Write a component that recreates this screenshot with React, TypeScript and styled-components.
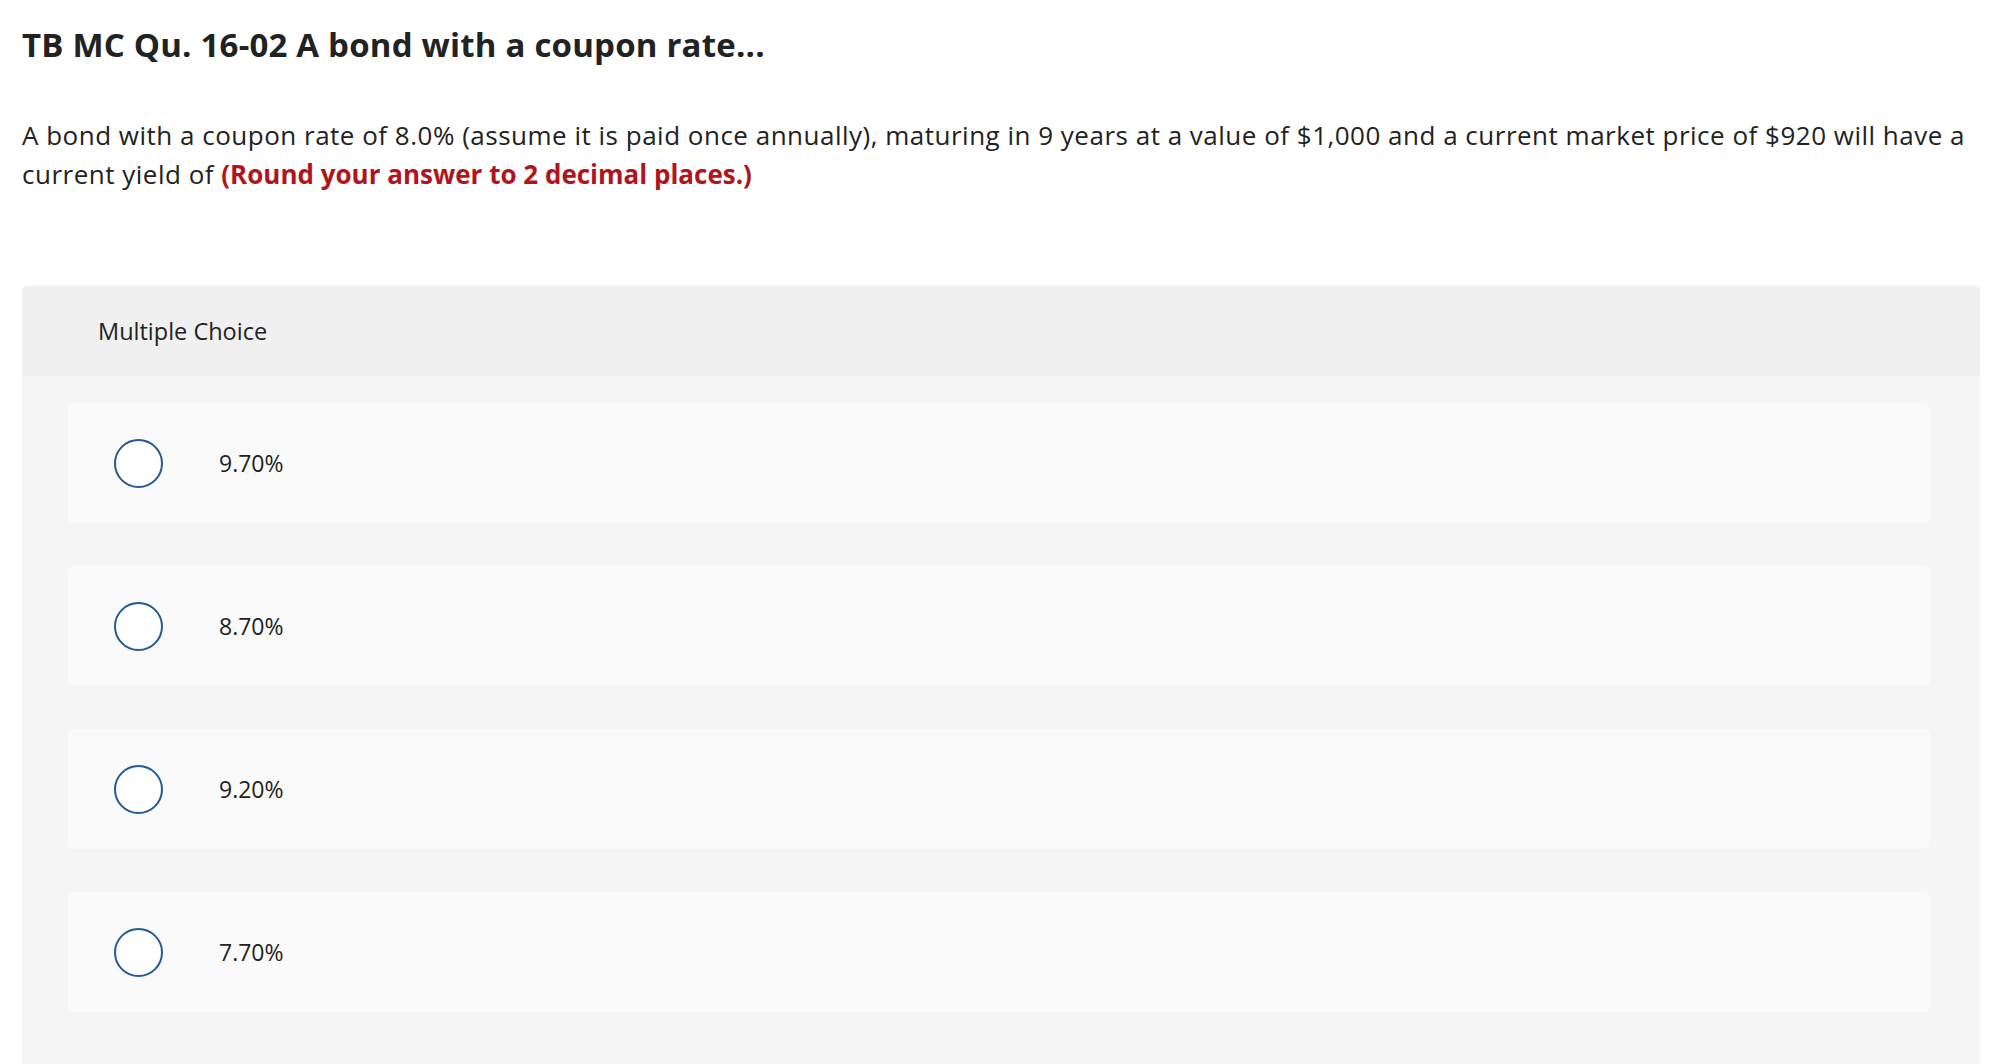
import styled, {createGlobalStyle} from "styled-components";

const GlobalStyle = createGlobalStyle`
  html, body {
    margin: 0;
    padding: 0;
    background: #fff;
    overflow: hidden;
  }
  body {
    font-family: "Open Sans", Lato, Arial, sans-serif;
    color: #222;
  }
`

const choices = ['9.70%', '8.70%', '9.20%', '7.70%']

const App = () => {
    return (
        <Page>
            <GlobalStyle/>
            <Title>TB MC Qu. 16-02 A bond with a coupon rate...</Title>
            <Prompt>
                <span>
                    A bond with a coupon rate of 8.0% (assume it is paid once annually), maturing in 9 years at a
                    value of $1,000 and a current market price of $920 will have a
                </span>
                <br/>
                <span>current yield of </span>
                <Hint>(Round your answer to 2 decimal places.)</Hint>
            </Prompt>
            <Panel>
                <PanelHeader>Multiple Choice</PanelHeader>
                <ChoiceList>
                    {choices.map(c => (
                        <Choice key={c}>
                            <Radio type="radio" name="answer"/>
                            <ChoiceText>{c}</ChoiceText>
                        </Choice>
                    ))}
                </ChoiceList>
            </Panel>
        </Page>
    )
}

const Page = styled.div`
  padding: 24px 34px 0 22px;
`
const Title = styled.h1`
  margin: 0;
  font-size: 33px;
  line-height: 42px;
  font-weight: 700;
  letter-spacing: 0.2px;
  color: #222;
`
const Prompt = styled.p`
  margin: 50px 0 0;
  font-size: 26px;
  line-height: 38.5px;
  letter-spacing: 0.5px;
  color: #222;
`
const Hint = styled.strong`
  color: #b0141c;
  font-weight: 700;
  letter-spacing: 0;
`
const Panel = styled.div`
  margin-top: 93px;
  background: #f5f5f5;
  border-radius: 5px 5px 0 0;
  padding-bottom: 60px;
`
const PanelHeader = styled.div`
  height: 90px;
  display: flex;
  align-items: center;
  padding-left: 76px;
  background: #f0f0f0;
  border-radius: 5px 5px 0 0;
  font-size: 23.5px;
  color: #222;
`
const ChoiceList = styled.div`
  display: flex;
  flex-direction: column;
  gap: 43px;
  padding: 27px 50px 0 46px;
`
const Choice = styled.label`
  height: 120px;
  display: flex;
  align-items: center;
  padding-left: 46px;
  background: #fafafa;
  border-radius: 6px;
  cursor: pointer;
`
const Radio = styled.input`
  appearance: none;
  margin: 0 56px 0 0;
  width: 49px;
  height: 49px;
  border: 2px solid #235a91;
  border-radius: 50%;
  background: #fff;
  box-sizing: border-box;
  flex-shrink: 0;
`
const ChoiceText = styled.span`
  font-size: 23px;
  color: #222;
`

export default App
